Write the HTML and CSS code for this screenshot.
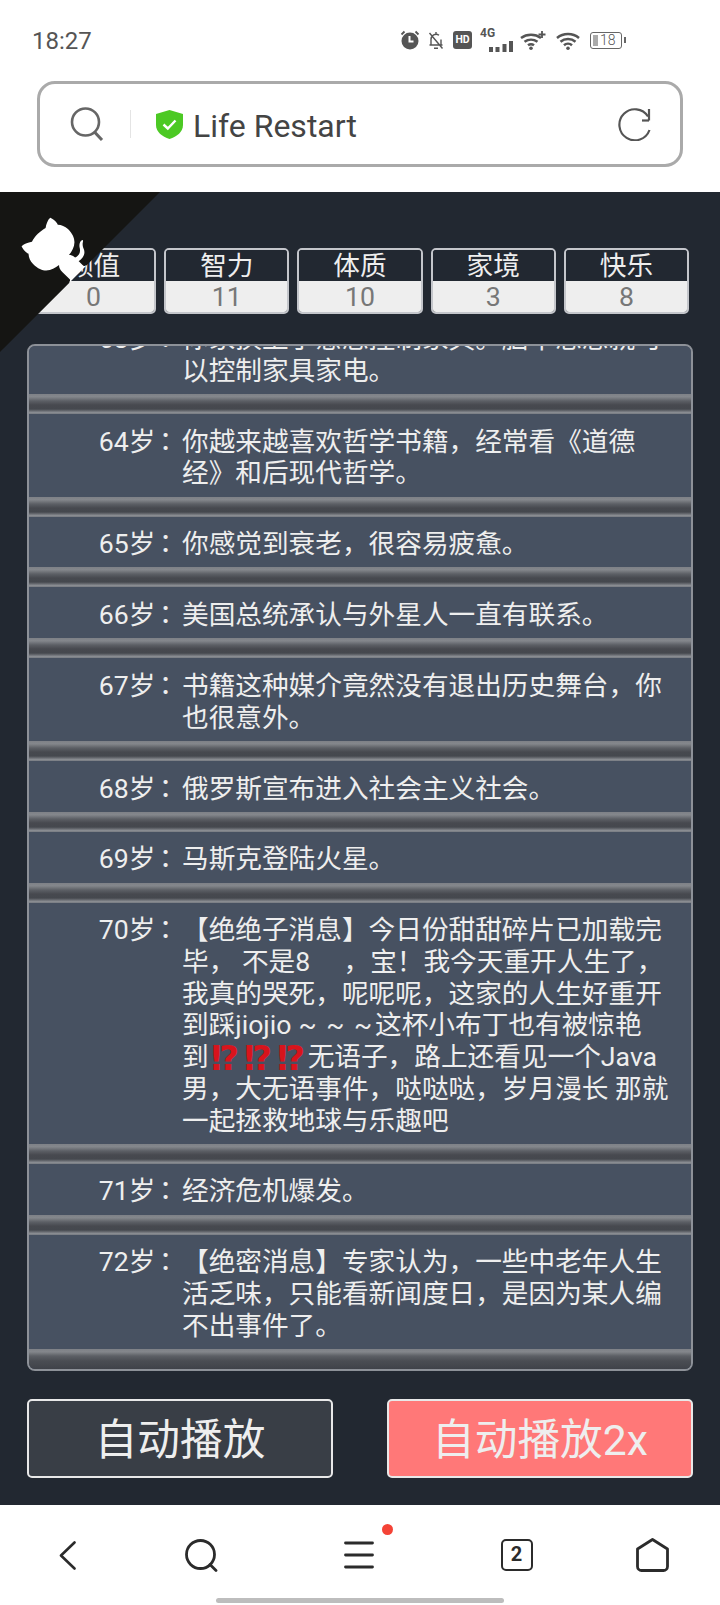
FILE: index.html
```html
<!DOCTYPE html>
<html lang="zh-CN">
<head>
<meta charset="utf-8">
<title>Life Restart</title>
<link rel="stylesheet" href="styles.css">
</head>
<body>
<header class="chrome">
  <div class="status">
    <span class="time">18:27</span>
    <div class="status-icons">
      <svg class="si" width="20" height="20" viewBox="0 0 20 20"><path d="M1.500 4.500 4.500 1.500M18.500 4.500 15.500 1.500" stroke="#555" stroke-width="1.800" fill="none"/><circle cx="10" cy="11" r="8.500" fill="#555"/><path d="M9.500 6v5.500h4" stroke="#fff" stroke-width="2" fill="none"/></svg>
      <svg class="si si-bell" width="16" height="19" viewBox="0 0 16 19"><path d="M3 14V8.500a5 5 0 0 1 8-4.200M13 8.500V14M1.500 14h13M6 17.300h4M8 1v2M1.500 2l13 15.500" stroke="#555" stroke-width="1.400" fill="none"/></svg>
      <span class="hd">HD</span>
      <div class="net">
        <span class="g4">4G</span>
        <svg class="bars" width="24" height="11" viewBox="0 0 24 11"><path d="M0 6h4v5H0zM6.500 6h4v5h-4zM13.500 3h4v8h-4zM20 0h4v11h-4z" fill="#555"/></svg>
      </div>
      <svg class="si wifi-plus" width="26" height="19" viewBox="0 0 26 19"><path d="M1 7a17 17 0 0 1 20 0M4.500 10.800a11 11 0 0 1 13 0M8 14.300a5 5 0 0 1 6 0" stroke="#555" stroke-width="2.500" fill="none"/><circle cx="11" cy="17.200" r="1.800" fill="#555"/><path d="M22 0v7M18.500 3.500h7" stroke="#555" stroke-width="1.800"/></svg>
      <svg class="si" width="24" height="19" viewBox="0 0 24 19"><path d="M1 7a17.500 17.500 0 0 1 22 0M4.500 10.800a11.500 11.500 0 0 1 15 0M8 14.300a6 6 0 0 1 8 0" stroke="#555" stroke-width="2.500" fill="none"/><circle cx="12" cy="17.200" r="1.800" fill="#555"/></svg>
      <div class="battery"><i class="fill"></i><span>18</span><b class="cap"></b></div>
    </div>
  </div>
  <div class="addr">
    <svg class="a-search" width="34" height="34" viewBox="0 0 34 34"><circle cx="15.500" cy="15" r="13.500" fill="none" stroke="#666" stroke-width="2.600"/><path d="M24.500 25 32 33" stroke="#666" stroke-width="3" fill="none"/></svg>
    <i class="addr-div"></i>
    <svg class="shield" width="27" height="29" viewBox="0 0 27 29"><path d="M13.500 0 27 4v11c0 7-6 11.500-13.500 14C6 26.500 0 22 0 15V4z" fill="#4cc924"/><path d="M7.500 14.500l4.300 4 7.700-8" stroke="#fff" stroke-width="2.400" fill="none"/></svg>
    <span class="site">Life Restart</span>
    <svg class="reload" width="34" height="34" viewBox="0 0 34 34"><path d="M30 9.500A15.500 15.500 0 1 0 31.500 23" fill="none" stroke="#555" stroke-width="2.200"/><path d="M31 2v11.500" fill="none" stroke="#555" stroke-width="2.200"/><path d="M31 13.500h-7" fill="none" stroke="#555" stroke-width="2.200"/></svg>
  </div>
</header>

<main class="game">
  <svg class="corner" width="160" height="160" viewBox="0 0 250 250">
    <g transform="translate(250 0) scale(-1 1)">
      <path fill="#151513" d="M0,0 L115,115 L130,115 L142,142 L250,250 L250,0 Z"/>
      <path fill="#fff" d="M128.3,109.0 C113.8,99.7 119.0,89.6 119.0,89.6 C122.0,82.7 120.5,78.6 120.5,78.6 C119.2,72.0 123.4,76.3 123.4,76.3 C127.3,80.9 125.5,87.3 125.5,87.3 C122.9,97.6 130.6,101.9 134.4,103.2"/>
      <path fill="#fff" d="M115.0,115.0 C114.9,115.1 118.7,116.5 119.8,115.4 L133.7,101.6 C136.9,99.2 139.9,98.4 142.2,98.6 C133.8,88.0 127.5,74.4 143.8,58.0 C148.5,53.4 154.0,51.2 159.7,51.0 C160.3,49.4 163.2,43.6 171.4,40.1 C171.4,40.1 176.1,42.5 178.8,56.2 C183.1,58.6 187.2,61.8 190.9,65.4 C194.5,69.0 197.7,73.2 200.1,77.6 C213.8,80.2 216.3,84.9 216.3,84.9 C212.7,93.1 206.9,96.0 205.4,96.6 C205.1,102.4 203.0,107.8 198.3,112.5 C181.9,128.9 168.3,122.5 157.7,114.1 C157.9,116.9 156.7,120.9 152.7,124.9 L141.0,136.5 C139.8,137.7 141.6,141.9 141.8,141.8 Z"/>
    </g>
  </svg>

  <section class="stats">
    <div class="stat"><span class="stat-name">颜值</span><span class="stat-val">0</span></div>
    <div class="stat"><span class="stat-name">智力</span><span class="stat-val">11</span></div>
    <div class="stat"><span class="stat-name">体质</span><span class="stat-val">10</span></div>
    <div class="stat"><span class="stat-name">家境</span><span class="stat-val">3</span></div>
    <div class="stat"><span class="stat-name">快乐</span><span class="stat-val">8</span></div>
  </section>

  <ul class="life">
    <li><span class="age">63岁<span class="colon" lang="ja">：</span></span><span class="ev">你家换上了意念控制家具。脑中想想就可以控制家具家电。</span></li>
    <li><span class="age">64岁<span class="colon" lang="ja">：</span></span><span class="ev">你越来越喜欢哲学书籍，经常看《道德经》和后现代哲学。</span></li>
    <li><span class="age">65岁<span class="colon" lang="ja">：</span></span><span class="ev">你感觉到衰老，很容易疲惫。</span></li>
    <li><span class="age">66岁<span class="colon" lang="ja">：</span></span><span class="ev">美国总统承认与外星人一直有联系。</span></li>
    <li><span class="age">67岁<span class="colon" lang="ja">：</span></span><span class="ev">书籍这种媒介竟然没有退出历史舞台，你也很意外。</span></li>
    <li><span class="age">68岁<span class="colon" lang="ja">：</span></span><span class="ev">俄罗斯宣布进入社会主义社会。</span></li>
    <li><span class="age">69岁<span class="colon" lang="ja">：</span></span><span class="ev">马斯克登陆火星。</span></li>
    <li><span class="age">70岁<span class="colon" lang="ja">：</span></span><span class="ev">【绝绝子消息】今日份甜甜碎片已加载完毕， 不是8　 ，宝！我今天重开人生了，我真的哭死，呢呢呢，这家的人生好重开到踩jiojio<span class="tilde">~ ~ ~</span>这杯小布丁也有被惊艳<span class="nb">到<span class="emo">⁉</span><span class="emo">⁉</span><span class="emo">⁉</span></span>无语子，路上还看见一个Java男，大无语事件，哒哒哒，岁月漫长 那就一起拯救地球与乐趣吧</span></li>
    <li><span class="age">71岁<span class="colon" lang="ja">：</span></span><span class="ev">经济危机爆发。</span></li>
    <li><span class="age">72岁<span class="colon" lang="ja">：</span></span><span class="ev">【绝密消息】专家认为，一些中老年人生活乏味，只能看新闻度日，是因为某人编不出事件了。</span></li>
  </ul>

  <div class="actions">
    <button class="btn">自动播放</button>
    <button class="btn btn-hot">自动播放2x</button>
  </div>
</main>

<nav class="nav">
  <div class="nav-row">
    <svg width="17" height="29" viewBox="0 0 17 29"><path d="M15.500 1.500 2 14.500l13.500 13" fill="none" stroke="#2b2b2b" stroke-width="2.600" stroke-linecap="round" stroke-linejoin="round"/></svg>
    <svg width="33" height="33" viewBox="0 0 33 33"><circle cx="15.500" cy="15.500" r="14" fill="none" stroke="#2b2b2b" stroke-width="2.800"/><path d="M25 25.500l6 6" stroke="#2b2b2b" stroke-width="2.800" stroke-linecap="round"/></svg>
    <div class="menu-wrap">
      <svg width="30" height="28" viewBox="0 0 30 28"><path d="M1.500 2h27M1.500 14h27M1.500 26h27" stroke="#2b2b2b" stroke-width="2.800" stroke-linecap="round"/></svg>
      <i class="dot"></i>
    </div>
    <div class="tabs">2</div>
    <svg width="33" height="34" viewBox="0 0 33 34"><path d="M16.500 1.500 31.500 11v17.500a4 4 0 0 1-4 4h-22a4 4 0 0 1-4-4V11z" fill="none" stroke="#2b2b2b" stroke-width="2.800" stroke-linejoin="round"/></svg>
  </div>
  <i class="home-bar"></i>
</nav>
</body>
</html>
```

FILE: styles.css
```css
* { box-sizing: border-box; }
html, body { margin: 0; padding: 0; }
body {
  width: 720px;
  height: 1605px;
  display: flex;
  flex-direction: column;
  font-family: Roboto, "Noto Sans CJK SC", sans-serif;
  background: #fff;
  overflow: hidden;
}

/* browser chrome */
.chrome { height: 192px; background: #fff; flex: none; padding-top: 26px; }
.status { height: 30px; display: flex; align-items: center; padding: 0 98px 0 32px; justify-content: space-between; }
.time { font-size: 24px; color: #555; }
.status-icons { display: flex; align-items: center; height: 24px; margin-top: -2px; }
.si { display: block; flex: none; margin-right: 8px; }
.si-bell { margin-right: 9px; }
.wifi-plus { margin-right: 10px; }
.hd {
  width: 19px; height: 18px; margin-right: 8px; border-radius: 3px; background: #555;
  color: #fff; font-size: 10.500px; font-weight: 700; line-height: 18px; text-align: center;
}
.net { position: relative; width: 33px; height: 23px; margin-right: 7px; }
.g4 { position: absolute; left: 0; top: -2px; font-size: 12px; font-weight: 700; color: #555; line-height: 13px; }
.bars { position: absolute; right: 0; bottom: 0; }
.battery {
  position: relative; width: 32px; height: 17px; border: 1.500px solid #666; border-radius: 3px;
  margin-left: 2px; display: flex; align-items: center; padding-left: 2px;
}
.fill { width: 5px; height: 11px; background: #aaa; flex: none; }
.battery span { font-size: 14px; color: #555; line-height: 14px; margin-left: 2px; font-weight: 300; }
.cap { position: absolute; right: -5px; top: 4px; width: 2px; height: 6px; background: #666; }

.addr {
  margin: 25px 37px 0; height: 86px; border: 3px solid #aaa; border-radius: 18px;
  display: flex; align-items: center; padding: 0 28px 0 30px;
}
.a-search { flex: none; }
.addr-div { width: 1px; height: 28px; background: #e4e4e4; margin: 0 25px 0 26px; flex: none; }
.shield { flex: none; }
.site { font-size: 32px; color: #444; margin-left: 10px; flex: 1; padding-top: 4px; }
.reload { flex: none; }

/* game */
.game {
  position: relative; flex: 1; min-height: 0; background: #222831;
  display: flex; flex-direction: column; padding: 56px 27px 27px;
}
.corner { position: absolute; left: 0; top: 0; z-index: 2; }

.stats { display: flex; gap: 8px; margin: 0 4px; height: 66px; flex: none; }
.stat {
  flex: 1; min-width: 0; display: flex; flex-direction: column; border: 2px solid #c4c6cb; border-radius: 5px;
  overflow: hidden; text-align: center; font-size: 26.670px; line-height: 33px;
}
.stat-name { height: 31px; color: #eee; background: #222831; }
.stat-val { flex: 1; color: #777; background: #eee; }

.life {
  flex: 1; min-height: 0; margin: 30px 0 28px; padding: 0; list-style: none;
  border: 2px solid #8d9198; border-radius: 8px; overflow: hidden;
  display: flex; flex-direction: column; justify-content: flex-end;
  background: #475161;
}
.life li {
  flex: none; display: flex; color: #eee; font-size: 26.670px; line-height: 31.700px;
  padding: 12.600px 20px 26.600px 0;
  background:
    linear-gradient(#7e8187 0, #84878c 14%, #5c5f65 35%, #47494f 55%, #45484e 75%, #6a6d73 85%, #8a8d92 92%, #777b82 100%) bottom / 100% 20px no-repeat,
    #475161;
}
.life li:last-child {
  background:
    linear-gradient(#7e8187 0, #84878c 14%, #5c5f65 35%, #4a4d53 60%, #3f4249 100%) bottom / 100% 20px no-repeat,
    #475161;
}
.age { flex: none; width: 153px; text-align: right; }
.colon { font-family: "Noto Sans CJK JP", sans-serif; position: relative; left: -3px; line-height: 0; }
.ev { flex: 1; min-width: 0; }
.tilde { word-spacing: 3px; margin: 0 3px 0 7px; }
.nb { white-space: nowrap; }
.emo {
  display: inline-block; width: 33px; text-align: center; color: #d8141c;
  font-family: "DejaVu Sans", sans-serif; font-weight: 700; font-size: 34px; line-height: 26px;
  vertical-align: top; padding-top: 3px;
}

.actions { display: flex; justify-content: space-between; flex: none; }
.btn {
  width: 306px; height: 79px; border: 2px solid #e8e8e8; border-radius: 5px; padding: 0 0 5px;
  background: #393e46; color: #eee; font-family: inherit; font-size: 42.670px;
}
.btn-hot { background: #ff7878; }

/* bottom nav */
.nav { position: relative; height: 100px; flex: none; background: #fff; padding-top: 33px; }
.nav-row {
  display: grid; grid-template-columns: 134px 135px 180px 135px 136px;
  align-items: center; justify-items: center; height: 34px;
}
.menu-wrap { position: relative; width: 30px; height: 28px; }
.menu-wrap svg { display: block; }
.dot {
  position: absolute; left: 38px; top: -17px; width: 11px; height: 11px;
  border-radius: 50%; background: #f44336;
}
.tabs {
  width: 32px; height: 32px; border: 2.800px solid #2b2b2b; border-radius: 5px;
  font-size: 20px; font-weight: 700; color: #2b2b2b; line-height: 26px; text-align: center;
}
.home-bar {
  position: absolute; left: 216px; bottom: 2px; width: 288px; height: 5px;
  border-radius: 3px; background: #bdbdbd;
}
```
